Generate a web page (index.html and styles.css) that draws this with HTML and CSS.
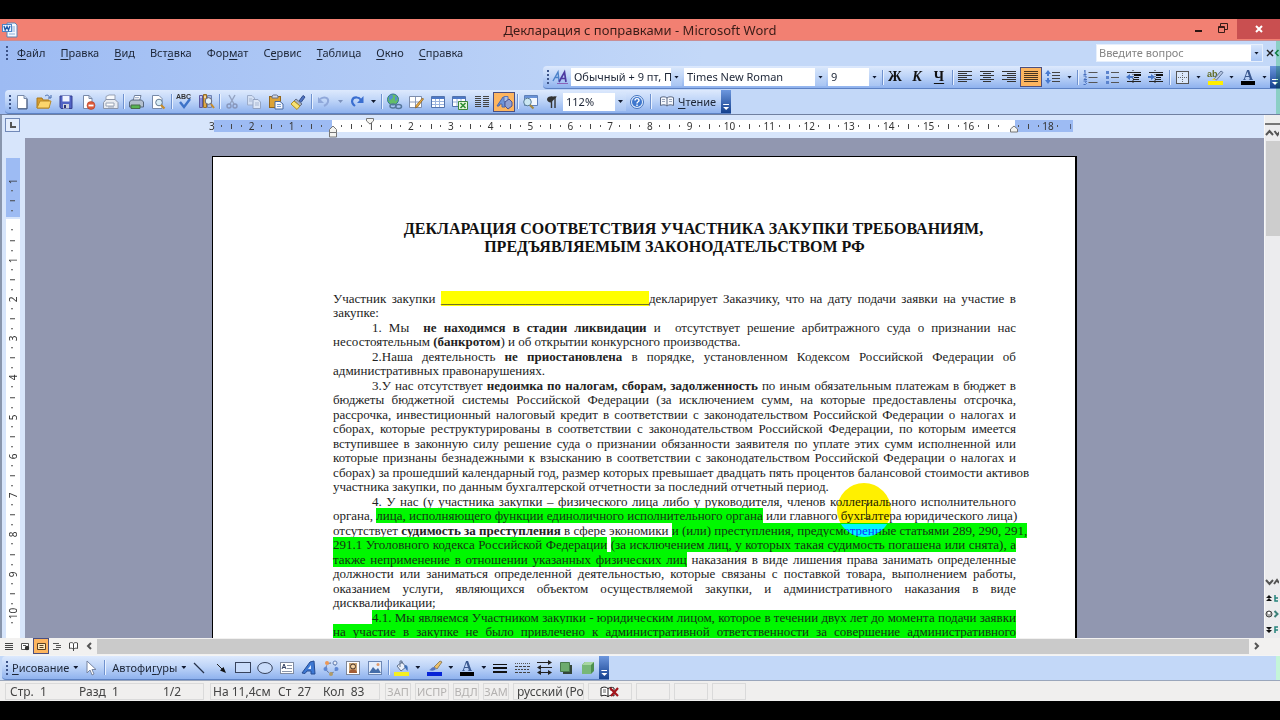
FILE: index.html
```html
<!DOCTYPE html>
<html lang="ru">
<head>
<meta charset="utf-8">
<title>Декларация с поправками - Microsoft Word</title>
<link rel="stylesheet" href="styles.css">
</head>
<body>
<div class="window">
<header class="titlebar">
  <svg class="app-icon" width="16" height="16" viewBox="0 0 16 16"><path d="M5 1h8l2 2v12H5z" fill="#f4f9ff" stroke="#5d84b4"/><path d="M8 5h5M8 7h5M8 9h5M7 12h6" stroke="#8badd8"/><rect x="0.500" y="2.500" width="9" height="7" fill="#eaf3ff" stroke="#4e86c8"/><path d="M2 4l1.200 4L5 4.500 6.500 8 8 4" fill="none" stroke="#205aa8" stroke-width="1.300"/></svg>
  <h1 class="window-title">Декларация с поправками - Microsoft Word</h1>
  <div class="window-buttons">
    <button class="win-btn" aria-label="Свернуть"><svg width="10" height="10" viewBox="0 0 10 10"><path d="M1 7h7v2H1z" fill="#2b1512"/></svg></button>
    <button class="win-btn" aria-label="Восстановить"><svg width="10" height="10" viewBox="0 0 10 10"><path d="M.5 3.500h6v6h-6zM.5 4.500h6M2.500 3V.500h7v6H7" fill="none" stroke="#3a1c18"/></svg></button>
    <button class="win-btn win-close" aria-label="Закрыть"><svg width="10" height="10" viewBox="0 0 10 10"><path d="M2 2l6 6M8 2L2 8" stroke="#fff" stroke-width="2"/></svg></button>
  </div>
</header>

<div class="bars">
  <div class="menu-row">
    <span class="grip"></span>
    <nav class="menu">
      <button><u>Ф</u>айл</button><button><u>П</u>равка</button><button><u>В</u>ид</button><button>Вст<u>а</u>вка</button><button>Фор<u>м</u>ат</button><button>С<u>е</u>рвис</button><button><u>Т</u>аблица</button><button><u>О</u>кно</button><button><u>С</u>правка</button>
    </nav>
    <div class="ask"><input type="text" placeholder="Введите вопрос" aria-label="Введите вопрос"><button class="drop" aria-label="Список вопросов"></button></div>
    <button class="doc-close" aria-label="Закрыть документ"><svg width="14" height="10" viewBox="0 0 14 10"><path d="M1 2l6 6M7 2L1 8" stroke="#222" stroke-width="1.400"/><path d="M12.500 2L9.500 5l3 3" fill="none" stroke="#16804f" stroke-width="1.600"/></svg></button>
  </div>

  <div class="toolbar format-bar">
    <span class="grip"></span>
    <button class="tool" aria-label="Стили"><svg width="18" height="16" viewBox="0 0 18 16"><path d="M2 12L7 3l1 9M4 8.500h4" fill="none" stroke="#4b82c9" stroke-width="1.400"/><path d="M8 13L13.500 3l1.500 10M10 9.500h5" fill="none" stroke="#4d3aa0" stroke-width="1.700"/><path d="M6 14.500h11" stroke="#8a62b8"/></svg></button>
    <span class="combo combo-style"><select aria-label="Стиль"><option>Обычный + 9 пт, По ширине</option></select><i class="drop"></i></span>
    <span class="combo combo-font"><select aria-label="Шрифт"><option>Times New Roman</option></select><i class="drop"></i></span>
    <span class="combo combo-size"><select aria-label="Размер шрифта"><option>9</option></select><i class="drop"></i></span>
    <i class="sep"></i>
    <button class="tool letter"><b>Ж</b></button>
    <button class="tool letter"><b><em>К</em></b></button>
    <button class="tool letter"><b><u>Ч</u></b></button>
    <i class="sep"></i>
    <button class="tool" aria-label="По левому краю"><svg width="14" height="12" viewBox="0 0 14 12"><path d="M0 .5h14M0 2.500h9M0 4.500h14M0 6.500h9M0 8.500h14M0 10.500h9" stroke="#333"/></svg></button>
    <button class="tool" aria-label="По центру"><svg width="14" height="12" viewBox="0 0 14 12"><path d="M0 .5h14M3 2.500h8M0 4.500h14M3 6.500h8M0 8.500h14M3 10.500h8" stroke="#333"/></svg></button>
    <button class="tool" aria-label="По правому краю"><svg width="14" height="12" viewBox="0 0 14 12"><path d="M0 .5h14M5 2.500h9M0 4.500h14M5 6.500h9M0 8.500h14M5 10.500h9" stroke="#333"/></svg></button>
    <button class="tool active" aria-label="По ширине"><svg width="14" height="12" viewBox="0 0 14 12"><path d="M0 .5h14M0 2.500h14M0 4.500h14M0 6.500h14M0 8.500h14M0 10.500h14" stroke="#4a3520"/></svg></button>
    <button class="tool" aria-label="Междустрочный интервал"><svg width="16" height="16" viewBox="0 0 16 16"><path d="M3 1l3 4H4v2H2V5H0zM3 15l3-4H4V9H2v2H0z" fill="#4a7bd0"/><path d="M7 3.500h8M7 6.500h8M7 9.500h8M7 12.500h8" stroke="#444"/></svg></button>
    <button class="arrow" aria-label="Выбор интервала"></button>
    <i class="sep"></i>
    <button class="tool" aria-label="Нумерация"><svg width="15" height="15" viewBox="0 0 15 15"><path d="M2 0v4M1 1h1M.5 4.500h3M.5 6h2.500v1.500L1 9.500h3M.5 11h3l-1 1.500 1 1-1 1H.5" fill="none" stroke="#466fbd"/><path d="M5.500 2.500h9M5.500 7.500h9M5.500 12.500h9" stroke="#555"/></svg></button>
    <button class="tool" aria-label="Маркеры"><svg width="15" height="15" viewBox="0 0 15 15"><path d="M1 1h3v3H1zM1 6h3v3H1zM1 11h3v3H1z" fill="#5b83cd"/><path d="M6 2.500h8M6 7.500h8M6 12.500h8" stroke="#555"/></svg></button>
    <button class="tool" aria-label="Уменьшить отступ"><svg width="16" height="14" viewBox="0 0 16 14"><path d="M1 2.500h14M7 9.500h6M1 11.500h14" stroke="#222"/><path d="M8 4h7v2H8zM8 7h5v1H8z" fill="#111"/><path d="M7 0v14" stroke="#333" stroke-dasharray="1 1"/><path d="M0 7l4-3v2h3v2H4v2z" fill="#4777c8"/></svg></button>
    <button class="tool" aria-label="Увеличить отступ"><svg width="16" height="14" viewBox="0 0 16 14"><path d="M1 2.500h14M7 9.500h6M1 11.500h14" stroke="#222"/><path d="M8 4h7v2H8zM8 7h5v1H8z" fill="#111"/><path d="M7 0v14" stroke="#333" stroke-dasharray="1 1"/><path d="M7 7L3 4v2H0v2h3v2z" fill="#4777c8"/></svg></button>
    <i class="sep"></i>
    <button class="tool" aria-label="Границы"><svg width="13" height="13" viewBox="0 0 13 13"><rect x=".5" y=".5" width="12" height="12" fill="#dbe8fb" stroke="#555"/><path d="M6.500 2v9M2 6.500h9" stroke="#666" stroke-dasharray="1 1"/></svg></button>
    <button class="arrow" aria-label="Вид границы"></button>
    <button class="tool" aria-label="Выделение цветом"><svg width="17" height="16" viewBox="0 0 17 16"><path d="M1 12h15v4H1z" fill="#ffee00"/><text x="0" y="8" class="svg-ab">ab</text><path d="M7 10l7-8 2 1.500-6.500 7.500z" fill="#b9c9e5" stroke="#5e7396"/><path d="M5 11l2-2 2 2z" fill="#e1cf3e"/></svg></button>
    <button class="arrow" aria-label="Цвет выделения"></button>
    <button class="tool" aria-label="Цвет шрифта"><svg width="16" height="16" viewBox="0 0 16 16"><text x="3" y="11" class="svg-a">A</text><path d="M1 12h14v4H1z" fill="#000"/></svg></button>
    <button class="arrow" aria-label="Выбор цвета шрифта"></button>
    <button class="endcap" aria-label="Параметры панели"></button>
  </div>

  <div class="toolbar standard-bar">
    <span class="grip"></span>
    <button class="tool" aria-label="Создать"><svg width="16" height="16" viewBox="0 0 16 16"><path d="M3.500 1.500h6.500l3 3v10H3.500z" fill="#fff" stroke="#7789a8"/><path d="M10 1.500v3h3" fill="#cbd9ee" stroke="#7789a8"/><path d="M13 5v10H4" fill="none" stroke="#475a7e"/></svg></button>
    <button class="tool" aria-label="Открыть"><svg width="16" height="16" viewBox="0 0 16 16"><path d="M1 14V4h5l1 2h6v8z" fill="#d79b2f" stroke="#a8781c"/><path d="M1 14l3-7h11l-2 7z" fill="#fbd56c" stroke="#b98a28"/><path d="M9 2c2-1.500 4-1 4.500 1.500M15 1v3h-3" fill="none" stroke="#4268ac"/></svg></button>
    <button class="tool" aria-label="Сохранить"><svg width="16" height="16" viewBox="0 0 16 16"><path d="M2 2h12v12.500H3L2 13z" fill="#5163c4" stroke="#343f91"/><rect x="4.500" y="2" width="7" height="5.500" fill="#eef3ff"/><rect x="5" y="10" width="6" height="4.500" fill="#cdd2dd"/><rect x="6" y="11" width="2" height="3" fill="#2b3478"/></svg></button>
    <button class="tool" aria-label="Разрешения"><svg width="16" height="16" viewBox="0 0 16 16"><path d="M3.500 1.500H9l3 3v10H3.500z" fill="#fff" stroke="#7789a8"/><path d="M9 1.500v3h3" fill="none" stroke="#7789a8"/><circle cx="11" cy="11.500" r="4" fill="#dd5b3b" stroke="#a63321" stroke-width=".5"/><path d="M8.500 11.500h5" stroke="#fff" stroke-width="1.800"/></svg></button>
    <button class="tool" aria-label="Сообщение"><svg width="17" height="16" viewBox="0 0 17 16"><path d="M4 7V2.500L7 1h6v6" fill="#f8fafd" stroke="#97a1b4"/><path d="M1.500 8.500L4 5.500h9l3 3v6h-14.500z" fill="#e8ebf1" stroke="#8c96aa"/><path d="M4 9h8v3H4zM6 13h6" fill="#fff" stroke="#99a3b5"/></svg></button>
    <i class="sep"></i>
    <button class="tool" aria-label="Печать"><svg width="16" height="16" viewBox="0 0 16 16"><path d="M5 7l1.500-5.500H13L11.500 7" fill="#fff" stroke="#6f7f9b"/><path d="M1.500 8l2-2h10l2 2v5h-14z" fill="#b3c0cf" stroke="#56677e"/><path d="M3 11h9v3.500H3z" fill="#57b551" stroke="#466b4b"/><path d="M7 3.500h4M6.500 5.200h4" stroke="#a9b7cf"/></svg></button>
    <button class="tool" aria-label="Предварительный просмотр"><svg width="16" height="16" viewBox="0 0 16 16"><path d="M2.500 1.500H9l3 3v10H2.500z" fill="#fff" stroke="#7789a8"/><circle cx="9" cy="8.500" r="3.300" fill="#d8edf7" stroke="#647c95"/><path d="M11 11l3.500 3.500" stroke="#c78d2a" stroke-width="2.200"/></svg></button>
    <i class="sep"></i>
    <button class="tool" aria-label="Правописание"><svg width="18" height="18" viewBox="0 0 18 18"><text x="1" y="6" class="svg-abc">ABC</text><path d="M5 9l4 5 6-8" fill="none" stroke="#3d73c8" stroke-width="2.400"/></svg></button>
    <button class="tool" aria-label="Справочные материалы"><svg width="17" height="17" viewBox="0 0 17 17"><path d="M1.500 2.500h3v12h-3z" fill="#8a8ed8" stroke="#5a589f"/><path d="M5.500 1.500h3v13h-3z" fill="#e0a848" stroke="#936f2b"/><path d="M9.500 2.500h4v12h-4z" fill="#a9bde6" stroke="#6d81b4"/><circle cx="10.500" cy="8" r="3.300" fill="#e4f3fb" stroke="#667"/><path d="M13 11l3 4" stroke="#c78d2a" stroke-width="2"/><path d="M2 4h2M6 4h2" stroke="#fff"/></svg></button>
    <i class="sep"></i>
    <button class="tool" aria-label="Вырезать"><svg width="16" height="16" viewBox="0 0 16 16"><path d="M5 1l5 9M11 1L6 10" stroke="#94a3c2" stroke-width="1.400"/><circle cx="5" cy="12" r="2" fill="none" stroke="#8796bb" stroke-width="1.400"/><circle cx="11" cy="12" r="2" fill="none" stroke="#8796bb" stroke-width="1.400"/></svg></button>
    <button class="tool" aria-label="Копировать"><svg width="16" height="16" viewBox="0 0 16 16"><path d="M1.500 1.500H6l2.500 2.500v7h-7z" fill="#d4e0f4" stroke="#9cacc9"/><path d="M7 5.500h5L14.500 8v6.500H7z" fill="#dce6f6" stroke="#92a3c2"/><path d="M3 5h3M3 7h3M9 9h4M9 11h4" stroke="#a9b8d2"/></svg></button>
    <button class="tool" aria-label="Вставить"><svg width="16" height="16" viewBox="0 0 16 16"><rect x="1.500" y="2.500" width="11" height="11" fill="#dca336" stroke="#93651a"/><path d="M4 4h6V2L8.500 1h-3L4 2z" fill="#d7dbe5" stroke="#66718a"/><path d="M7 7.500h5l3 2.500v5H7z" fill="#f5f8ff" stroke="#49699e"/><path d="M9 10.500h4M9 12.500h4" stroke="#7da1d5"/></svg></button>
    <button class="tool" aria-label="Формат по образцу"><svg width="16" height="16" viewBox="0 0 16 16"><path d="M9 7l4-5.500 2 1.500-4 5.500z" fill="#4f73c2" stroke="#344f8d"/><path d="M6 5l6 5-2 2-6-5z" fill="#a9b2c4" stroke="#667086"/><path d="M4 7l6 5-3 3.500L1 10z" fill="#f7e273" stroke="#b18f22"/></svg></button>
    <i class="sep"></i>
    <button class="tool" aria-label="Отменить"><svg width="16" height="16" viewBox="0 0 16 16"><path d="M4 5c5-3 9-1 8 3-.5 2-2 3-4 4" fill="none" stroke="#90a8da" stroke-width="2"/><path d="M2 3v6h6z" fill="#90a8da"/></svg></button>
    <button class="arrow muted" aria-label="История отмены"></button>
    <button class="tool" aria-label="Вернуть"><svg width="16" height="16" viewBox="0 0 16 16"><path d="M6 12C1 8 3 3 8 3.500c2 0 3 1 4 2.500" fill="none" stroke="#3a6ed0" stroke-width="2.200"/><path d="M14.500 2v7H8z" fill="#3a6ed0"/></svg></button>
    <button class="arrow" aria-label="История возврата"></button>
    <i class="sep"></i>
    <button class="tool" aria-label="Гиперссылка"><svg width="17" height="17" viewBox="0 0 17 17"><circle cx="7" cy="6.500" r="5.500" fill="#62bd68" stroke="#33739a"/><path d="M3 4c2-3 4-2 4 0S4 6 3 9M9 3c3 1 3 4 0 5" fill="#5490cf"/><ellipse cx="7" cy="13" rx="3" ry="2" fill="none" stroke="#55779b" stroke-width="1.500"/><ellipse cx="12.500" cy="13.500" rx="3" ry="2" fill="none" stroke="#55779b" stroke-width="1.500"/></svg></button>
    <button class="tool" aria-label="Панель границ"><svg width="16" height="16" viewBox="0 0 16 16"><path d="M1.500 2.500h12v11h-12z" fill="#fff" stroke="#7d8dab"/><path d="M7.500 3v10M2 8h11" stroke="#8a9aba"/><path d="M14.500 4l1 1-6 8-2 1 .5-2.500z" fill="#ebaa3e" stroke="#8d642a" stroke-width=".8"/></svg></button>
    <button class="tool" aria-label="Добавить таблицу"><svg width="16" height="16" viewBox="0 0 16 16"><path d="M1.500 2.500h13v11h-13z" fill="#fff" stroke="#5373ac"/><path d="M2 3h12v2H2z" fill="#4c78c8"/><path d="M5.500 5v8M9.500 5v8M2 7.500h12M2 10.500h12" stroke="#9bb3dd"/></svg></button>
    <button class="tool" aria-label="Добавить таблицу Excel"><svg width="16" height="16" viewBox="0 0 16 16"><path d="M.5 2.500h13v10H.5z" fill="#fff" stroke="#5373ac"/><path d="M1 3h12v2H1z" fill="#4c78c8"/><path d="M5 5v7M9 5v7M1 8h12" stroke="#9bb3dd"/><path d="M6.500 7.500h9v8h-9z" fill="#e7f6dc" stroke="#39853a"/><path d="M8.500 9l5 5M13.500 9l-5 5" stroke="#2d8f35" stroke-width="1.600"/></svg></button>
    <button class="tool" aria-label="Колонки"><svg width="14" height="12" viewBox="0 0 14 12"><path d="M0 .5h6M8 .5h6M0 2.500h6M8 2.500h6M0 4.500h6M8 4.500h6M0 6.500h6M8 6.500h6M0 8.500h6M8 8.500h6M0 10.500h6M8 10.500h6" stroke="#444"/></svg></button>
    <button class="tool active" aria-label="Рисование"><svg width="17" height="16" viewBox="0 0 17 16"><path d="M1 12L7 3l2 1v9H6V10H4l-1 2z" fill="#6e94da" stroke="#4a66ae"/><path d="M8 2.500h4v5H8z" fill="#aac1ec" stroke="#5c74b2"/><path d="M9 8l4-3 3 3v4l-4 3-3-3z" fill="#8f9fd2" stroke="#4c5492"/></svg></button>
    <i class="sep"></i>
    <button class="tool" aria-label="Схема документа"><svg width="16" height="16" viewBox="0 0 16 16"><path d="M2.500 1.500h13v10h-13z" fill="#f3f8ff" stroke="#5e80b8"/><path d="M3 2h12v2H3z" fill="#6a93d8"/><circle cx="5.500" cy="8" r="3.800" fill="#cbe7f3" stroke="#577c98"/><path d="M8 11l3.500 3.500" stroke="#a58a42" stroke-width="2.200"/></svg></button>
    <button class="tool" aria-label="Непечатаемые знаки"><svg width="12" height="14" viewBox="0 0 12 14"><path d="M11 1.500H4.500C2 1.500 1 3 1 4.500S2.500 7.500 5 7.500z" fill="#333"/><path d="M5.500 1.500V13M9 1.500V13" stroke="#333" stroke-width="1.400"/></svg></button>
    <span class="combo combo-zoom"><select aria-label="Масштаб"><option>112%</option></select><i class="drop"></i></span>
    <button class="tool" aria-label="Справка"><svg width="14" height="14" viewBox="0 0 14 14"><circle cx="7" cy="7" r="6.500" fill="#e5f0ff" stroke="#4473bd"/><circle cx="7" cy="7" r="5" fill="#3e77ce"/><path d="M5 5.500c0-2.500 4-2.500 4 0C9 7 7 6.500 7 8.500M7 9.500V11" fill="none" stroke="#fff" stroke-width="1.400"/></svg></button>
    <i class="sep"></i>
    <button class="text-tool reading"><svg width="14" height="12" viewBox="0 0 14 12"><path d="M.5 1.500c2-1 5-1 6.500.5 1.500-1.500 4.500-1.500 6.500-.5v8c-2-1-5-1-6.500.5-1.500-1.500-4.500-1.500-6.500-.5zM7 2v8" fill="#f4f7fc" stroke="#596782"/><path d="M2 3.500h3M2 5.500h3M9 3.500h3M9 5.500h3" stroke="#99a6bd"/></svg><span><u>Ч</u>тение</span></button>
    <button class="endcap" aria-label="Параметры панели"></button>
  </div>
</div>

<main class="workspace">
  <div class="tab-corner"><button class="tab-type" aria-label="Тип табуляции"><svg width="8" height="8" viewBox="0 0 8 8"><path d="M2 1v5h5" fill="none" stroke="#555" stroke-width="2"/></svg></button></div>
  <div class="hruler">
    <div class="hruler-track">
      <div class="hruler-scale">
        <span class="bare">3</span><span>2</span><span>1</span><span></span><span>1</span><span>2</span><span>3</span><span>4</span><span>5</span><span>6</span><span>7</span><span>8</span><span>9</span><span>10</span><span>11</span><span>12</span><span>13</span><span>14</span><span>15</span><span>16</span><span></span><span>18</span>
      </div>
      <svg class="marker marker-first" width="10" height="7" viewBox="0 0 10 7"><path d="M1.500.500h7v2.500L5 6 1.500 3z" fill="#f4f4f0" stroke="#777"/></svg>
      <svg class="marker marker-left" width="10" height="13" viewBox="0 0 10 13"><path d="M1.500 7.500h7V12h-7zM1.500 7.500V4.500L5 1l3.500 3.500v3z" fill="#f4f4f0" stroke="#777"/></svg>
      <svg class="marker marker-right" width="10" height="8" viewBox="0 0 10 8"><path d="M1.500 7V4L5 1l3.500 3v3z" fill="#f4f4f0" stroke="#777"/></svg>
    </div>
  </div>
  <div class="vruler">
    <div class="vruler-scale">
      <span class="bare">1</span><span></span><span>1</span><span>2</span><span>3</span><span>4</span><span>5</span><span>6</span><span>7</span><span>8</span><span>9</span><span>10</span>
    </div>
  </div>
  <div class="canvas">
    <article class="page">
      <h2>ДЕКЛАРАЦИЯ СООТВЕТСТВИЯ УЧАСТНИКА ЗАКУПКИ ТРЕБОВАНИЯМ,<br>ПРЕДЪЯВЛЯЕМЫМ ЗАКОНОДАТЕЛЬСТВОМ РФ</h2>
      <p class="flush"><span>Участник закупки <mark class="blank">________________________________</mark>декларирует Заказчику, что на дату подачи заявки на участие в</span><span>закупке:</span></p>
      <p><span>1. Мы&nbsp; <b>не находимся в стадии ликвидации</b> и&nbsp; отсутствует решение арбитражного суда о признании нас</span><span>несостоятельным <b>(банкротом</b>) и об открытии конкурсного производства.</span></p>
      <p><span>2.Наша деятельность <b>не приостановлена</b> в порядке, установленном Кодексом Российской Федерации об</span><span>административных правонарушениях.</span></p>
      <p><span>3.У нас отсутствует <b>недоимка по налогам, сборам, задолженность</b> по иным обязательным платежам в бюджет в</span><span>бюджеты бюджетной системы Российской Федерации (за исключением сумм, на которые предоставлены отсрочка,</span><span>рассрочка, инвестиционный налоговый кредит в соответствии с законодательством Российской Федерации о налогах и</span><span>сборах, которые реструктурированы в соответствии с законодательством Российской Федерации, по которым имеется</span><span>вступившее в законную силу решение суда о признании обязанности заявителя по уплате этих сумм исполненной или</span><span>которые признаны безнадежными к взысканию в соответствии с законодательством Российской Федерации о налогах и</span><span>сборах) за прошедший календарный год, размер которых превышает двадцать пять процентов балансовой стоимости активов</span><span>участника закупки, по данным бухгалтерской отчетности за последний отчетный период.</span></p>
      <p><span>4. У нас (у участника закупки – физического лица либо у руководителя, членов коллегиального исполнительного</span><span>органа, <mark>лица, исполняющего функции единоличного исполнительного органа</mark> или главного бухгалтера юридического лица)</span><span>отсутствует <b>судимость за преступления</b> в сфере экономики <mark>и (или) преступления, предусмотренные статьями 289, 290, 291,</mark></span><span><mark>291.1 Уголовного кодекса Российской Федерации</mark> <mark>(за исключением лиц, у которых такая судимость погашена или снята), а</mark></span><span><mark>также неприменение в отношении указанных физических лиц</mark> наказания в виде лишения права занимать определенные</span><span>должности или заниматься определенной деятельностью, которые связаны с поставкой товара, выполнением работы,</span><span>оказанием услуги, являющихся объектом осуществляемой закупки, и административного наказания в виде</span><span>дисквалификации;</span></p>
      <p class="open"><span><mark>4.1. Мы являемся Участником закупки - юридическим лицом, которое в течении двух лет до момента подачи заявки</mark></span><span><mark>на участие в закупке не было привлечено к административной ответственности за совершение административного</mark></span></p>
      <i class="spot spot-top"></i><i class="spot spot-bottom"></i>
      <svg class="caret" width="7" height="16" viewBox="0 0 7 16"><path d="M1 .5h2l.5 1 .5-1h2M3.500 1v14M1 15.500h2l.5-1 .5 1h2" fill="none" stroke="#555a20"/></svg>
    </article>
  </div>
  <div class="vscroll">
    <i class="split"></i>
    <button aria-label="Вверх"><svg width="14" height="8" viewBox="0 0 14 8"><path d="M1 6l3.500-4L8 6M9.500 2l3 4 2-3" fill="none" stroke="#555" stroke-width="2"/></svg></button>
    <i class="vthumb"></i>
    <div class="vscroll-end">
      <button aria-label="Вниз"><svg width="14" height="8" viewBox="0 0 14 8"><path d="M1 2l3.500 4L8 2M9 6l3-4 2 3" fill="none" stroke="#555" stroke-width="2"/></svg></button>
      <button aria-label="Предыдущая страница"><svg width="14" height="8" viewBox="0 0 14 8"><path d="M1 4l3-3 3 3zM1 7l3-3 3 3z" fill="#111"/><path d="M10 1v6h3M10 4h3" fill="none" stroke="#25837c" stroke-width="1.500"/></svg></button>
      <button aria-label="Объект перехода"><svg width="14" height="8" viewBox="0 0 14 8"><circle cx="4" cy="4" r="3" fill="#aaa" stroke="#444"/><path d="M3 2h2v2H3z" fill="#fff"/><path d="M9.500 1l3 3-3 3" fill="none" stroke="#3c8079" stroke-width="2"/></svg></button>
      <button aria-label="Следующая страница"><svg width="14" height="8" viewBox="0 0 14 8"><path d="M1 1h6L4 4zM1 4h6L4 7z" fill="#111"/><path d="M10 7V1h3M10 4h3" fill="none" stroke="#25837c" stroke-width="1.500"/></svg></button>
    </div>
  </div>
</main>

<div class="hscroll">
  <button class="view" aria-label="Обычный режим"><svg width="8" height="9" viewBox="0 0 8 9"><path d="M0 1.500h8M0 3.500h8M0 5.500h8M0 7.500h8" stroke="#444"/></svg></button>
  <button class="view" aria-label="Веб-документ"><svg width="9" height="9" viewBox="0 0 9 9"><path d="M.5 1.500h7v6h-7zM2 3.500h3" fill="#fff" stroke="#555"/><circle cx="6" cy="6" r="2.200" fill="#333"/></svg></button>
  <button class="view view-on" aria-label="Разметка страницы"><svg width="9" height="9" viewBox="0 0 9 9"><path d="M.5 1.500h8v6h-8zM2.500 3.500h4M2.500 5.500h4" fill="#ffe9bd" stroke="#5a4020"/></svg></button>
  <button class="view" aria-label="Структура"><svg width="9" height="9" viewBox="0 0 9 9"><path d="M0 1.500h6M3 3.500h5M3 5.500h5M0 7.500h6" stroke="#555"/></svg></button>
  <button class="view" aria-label="Режим чтения"><svg width="9" height="9" viewBox="0 0 9 9"><path d="M.5 1c1.500-.7 3-.5 4 .5C5.500.500 7 .3 8.500 1v5.500C7 6 5.500 6 4.500 7.500 3.500 6 2 6 .5 6.500zM4.500 2v7" fill="#fff" stroke="#444"/></svg></button>
  <button class="view" aria-label="Влево"><svg width="8" height="8" viewBox="0 0 8 8"><path d="M6 1L3 4l3 3" fill="none" stroke="#555" stroke-width="2"/></svg></button>
  <i class="htrack"></i>
  <button class="view" aria-label="Вправо"><svg width="8" height="8" viewBox="0 0 8 8"><path d="M2 1l3 3-3 3" fill="none" stroke="#555" stroke-width="2"/></svg></button>
  <i class="hcorner"></i>
</div>

<div class="draw-row">
  <div class="toolbar draw-bar">
    <span class="grip"></span>
    <button class="text-tool"><span><u>Р</u>исование</span><i class="tri"></i></button>
    <button class="tool" aria-label="Выбор объектов"><svg width="12" height="16" viewBox="0 0 12 16"><path d="M2 1v12l3-3 2 5 2-1-2-4.500h4z" fill="#fff" stroke="#7684a1"/></svg></button>
    <i class="sep"></i>
    <button class="text-tool autoshapes"><span>Автофи<u>г</u>уры</span><i class="tri"></i></button>
    <button class="tool" aria-label="Линия"><svg width="16" height="16" viewBox="0 0 16 16"><path d="M3 3l10 10" stroke="#26324a" stroke-width="1.200"/></svg></button>
    <button class="tool" aria-label="Стрелка"><svg width="16" height="16" viewBox="0 0 16 16"><path d="M4 4l6 6" stroke="#222"/><path d="M13 13L7 10.500 10.500 7z" fill="#111"/></svg></button>
    <button class="tool" aria-label="Прямоугольник"><svg width="16" height="16" viewBox="0 0 16 16"><rect x=".5" y="2.500" width="15" height="10" fill="#c9dcfa" stroke="#37435c"/></svg></button>
    <button class="tool" aria-label="Овал"><svg width="16" height="16" viewBox="0 0 16 16"><ellipse cx="8" cy="8" rx="7.300" ry="5.500" fill="#c9dcfa" stroke="#37435c"/></svg></button>
    <button class="tool" aria-label="Надпись"><svg width="16" height="16" viewBox="0 0 16 16"><rect x="1.500" y="2.500" width="13" height="11" fill="#fff" stroke="#808ba1"/><path d="M3 9l2-5 2 5M4 7.500h2" fill="none" stroke="#344263"/><path d="M8 5.500h5M8 8.500h5M3 11.500h10" stroke="#8994a8"/></svg></button>
    <button class="tool" aria-label="Объект WordArt"><svg width="16" height="16" viewBox="0 0 16 16"><path d="M1 13L9 2l4-1 1 13h-4v-3H6l-2 2.500z" fill="#3d78d3" stroke="#254c93"/><path d="M7 9h3V5z" fill="#dce9fd"/></svg></button>
    <button class="tool" aria-label="Диаграмма"><svg width="16" height="16" viewBox="0 0 16 16"><circle cx="8" cy="8" r="5" fill="none" stroke="#53658b" stroke-dasharray="3 2"/><circle cx="4" cy="3" r="2" fill="#ec9855"/><circle cx="12" cy="3" r="2" fill="#e8ecf4" stroke="#6481b5"/><circle cx="2.500" cy="9" r="2" fill="#5f88d4"/><circle cx="13.500" cy="9" r="2" fill="#5f88d4"/><circle cx="8" cy="14" r="2" fill="#b29b67"/></svg></button>
    <button class="tool" aria-label="Картинка"><svg width="16" height="16" viewBox="0 0 16 16"><rect x="1.500" y="1.500" width="13" height="13" fill="#fff" stroke="#7e8797"/><rect x="4" y="3" width="8" height="10" fill="#c8a373"/><circle cx="8" cy="6.500" r="2.500" fill="#f4d3a2" stroke="#473428"/><path d="M4 13c0-5 8-5 8 0z" fill="#a45d34"/></svg></button>
    <button class="tool" aria-label="Рисунок"><svg width="16" height="16" viewBox="0 0 16 16"><rect x="1.500" y="1.500" width="13" height="13" fill="#e5eefb" stroke="#6d87b4"/><path d="M2 13l4-6 3 3 2-2 3 5z" fill="#446da9"/><circle cx="11" cy="4.500" r="1.500" fill="#e39a69"/></svg></button>
    <i class="sep"></i>
    <button class="tool" aria-label="Цвет заливки"><svg width="17" height="16" viewBox="0 0 17 16"><path d="M1 12h15v4H1z" fill="#f4ef21"/><path d="M4 6l5-4 4 5-5 4z" fill="#edf2fa" stroke="#60728e"/><path d="M7 7V1h2v3" fill="none" stroke="#60728e"/><path d="M12 5c3 0 3 3 2.500 6C13 10 13 8 11 7z" fill="#3d6fb6"/></svg></button>
    <button class="arrow" aria-label="Выбор заливки"></button>
    <button class="tool" aria-label="Цвет линий"><svg width="17" height="16" viewBox="0 0 17 16"><path d="M1 12h15v4H1z" fill="#0724d6"/><path d="M8 7l6-6 2 1-5 7z" fill="#ecc068" stroke="#80704f" stroke-width=".8"/><path d="M3 10c2 0 2-3 5-3l2 2c-2 2-4 2-7 1z" fill="#5675bd"/></svg></button>
    <button class="arrow" aria-label="Выбор цвета линий"></button>
    <button class="tool" aria-label="Цвет текста"><svg width="16" height="16" viewBox="0 0 16 16"><text x="3" y="11" class="svg-a">A</text><path d="M1 12h14v4H1z" fill="#000"/></svg></button>
    <button class="arrow" aria-label="Выбор цвета текста"></button>
    <button class="tool" aria-label="Тип линии"><svg width="14" height="12" viewBox="0 0 14 12"><path d="M0 2.500h14" stroke="#111"/><path d="M0 6h14" stroke="#111" stroke-width="2"/><path d="M0 10h14" stroke="#111" stroke-width="2"/></svg></button>
    <button class="tool" aria-label="Тип штриха"><svg width="15" height="12" viewBox="0 0 15 12"><path d="M0 1.500h15" stroke="#555" stroke-dasharray="1 1"/><path d="M0 4.500h15M0 10.500h15" stroke="#444" stroke-dasharray="3 1"/><path d="M0 7.500h15" stroke="#444" stroke-dasharray="2 1"/></svg></button>
    <button class="tool" aria-label="Вид стрелки"><svg width="15" height="15" viewBox="0 0 15 15"><path d="M0 2.500h12M3 7.500h12M2 12.500h11" stroke="#222"/><path d="M15 2.500L11 0v5zM0 7.500L4 5v5zM0 12.500L4 10v5zM15 12.500L11 10v5z" fill="#222"/></svg></button>
    <button class="tool" aria-label="Тень"><svg width="14" height="14" viewBox="0 0 14 14"><path d="M4 4h9v9H4z" fill="#34463a"/><path d="M1.500 1.500h9v9h-9z" fill="#6cab6e" stroke="#47794b"/></svg></button>
    <button class="tool" aria-label="Объем"><svg width="16" height="16" viewBox="0 0 16 16"><path d="M2 5l3-3h9v9l-3 3H2z" fill="#4c8f4f"/><path d="M2 5h9v9H2z" fill="#77b778"/><path d="M2 5l3-3h9l-3 3z" fill="#a6d6a1"/></svg></button>
    <button class="endcap" aria-label="Параметры панели"></button>
  </div>
</div>

<footer class="status">
  <div class="cell cell-page"><span>Стр.&nbsp; 1</span><span>Разд&nbsp; 1</span><span>1/2</span></div>
  <div class="cell cell-pos"><span>На 11,4см</span><span>Ст&nbsp; 27</span><span>Кол&nbsp; 83</span></div>
  <div class="cell mode">ЗАП</div><div class="cell mode mode-wide">ИСПР</div><div class="cell mode">ВДЛ</div><div class="cell mode">ЗАМ</div>
  <div class="cell cell-lang">русский (Ро</div>
  <div class="cell cell-spell"><svg width="20" height="12" viewBox="0 0 20 12"><path d="M1 2c3-1.500 5-1 7 .5 2-1.500 4-1.500 6-.5v8c-2-1-4-1-6 .5-2-1.500-4-1.500-7-.5zM8 2v9" fill="#fff" stroke="#222"/><path d="M3 4h3M3 6h3M10 4h3" stroke="#666"/><path d="M10 2l8 8M18 2l-7 8" stroke="#a3151b" stroke-width="2.200"/></svg></div>
  <div class="cell cell-blank"></div><div class="cell cell-blank"></div><div class="cell cell-blank"></div>
</footer>
</div>
</body>
</html>
```
FILE: styles.css
```css
* { box-sizing: border-box; }

body {
  margin: 0;
  background: #000;
  color: #1c2536;
  font: 11px/16px "Noto Sans", "Open Sans", sans-serif;
}

button, input, select {
  margin: 0;
  padding: 0;
  border: 0;
  background: none;
  color: inherit;
  font: inherit;
}

svg { display: block; flex: none; }
u { text-underline-offset: 2px; }

.window {
  display: flex;
  flex-direction: column;
  height: 100vh;
  border: solid #000;
  border-width: 19px 0;
  overflow: hidden;
}

/* Title bar */
.titlebar {
  display: grid;
  grid-template-columns: 1fr auto 1fr;
  align-items: center;
  height: 22px;
  flex: none;
  background: #f28072;
  border-bottom: 1px solid #c98e95;
}
.app-icon { margin-left: 2px; }
.window-title { margin: 0; font-size: 13px; line-height: 20px; font-weight: 400; color: #3a1c18; }
.window-buttons { display: flex; justify-content: flex-end; align-self: stretch; }
.win-btn { display: grid; place-items: center; width: 24px; height: 18px; }
.win-close { width: 43px; height: 20px; margin-left: 2px; background: #c94f50; }

/* Menu and tool bars */
.bars {
  position: relative;
  flex: none;
  display: flex;
  flex-direction: column;
  height: 74px;
  background: linear-gradient(90deg, #9dbbf3, #c3d8f8 55%);
  border-bottom: 1px solid #7080a0;
}
.bars::after {
  content: "";
  position: absolute;
  top: 0;
  right: 0;
  width: 4px;
  height: 73px;
  background: #b6f5cb;
  mix-blend-mode: multiply;
}
.menu-row { display: flex; align-items: center; height: 24px; padding-left: 6px; }
.menu { display: flex; flex: 1; gap: 15px; margin-left: 9px; }
.grip {
  flex: none;
  width: 2px;
  height: 14px;
  background: repeating-linear-gradient(#3c5488 0 2px, transparent 2px 4px);
}
.ask { display: flex; width: 167px; height: 18px; background: #fff; border: 1px solid #e6effc; }
.ask input { flex: 1; min-width: 0; padding-left: 2px; outline: 0; }
.ask input::placeholder { color: #858585; opacity: 1; }
.doc-close { margin-left: 3px; }

.toolbar {
  display: flex;
  align-items: center;
  height: 23px;
  padding-left: 4px;
  border-radius: 4px 0 0 4px;
  background: linear-gradient(#dde9fd, #bfd5f8 45%, #8fb2ee);
  border-bottom: 1px solid #5d82c4;
}
.format-bar { align-self: flex-end; margin-top: 1px; }
.standard-bar { align-self: flex-start; height: 24px; margin: 1px 0 0 5px; }

.tool { display: grid; place-items: center; flex: none; width: 22px; height: 20px; }
.active { background: #fdb55f; border: 1px solid #4b4f80; }
.letter { font: 14px/16px "Liberation Serif", serif; color: #111; }
.sep { flex: none; width: 1px; height: 15px; margin: 0 1px 0 2px; background: #6f92cf; box-shadow: 1px 0 #e8f1ff; }

.drop, .arrow { display: grid; place-items: center; flex: none; width: 11px; }
.arrow { height: 20px; }
.drop { background: linear-gradient(#d6e5fb, #a9c5f3); }
.drop::after, .arrow::after, .tri {
  content: "";
  width: 5px;
  height: 3px;
  background: #111a30;
  clip-path: polygon(0 0, 100% 0, 50% 100%);
}
.muted::after { background: #7d92bd; }

.combo { display: flex; flex: none; height: 18px; margin-right: 2px; background: #fff; }
.combo select { flex: 1; min-width: 0; padding-left: 3px; appearance: none; overflow: hidden; white-space: nowrap; outline: 0; }
.combo-style { width: 111px; }
.combo-font { width: 142px; }
.combo-size { width: 52px; margin-right: 0; }
.combo-zoom { width: 63px; margin-right: 0; }

.text-tool { display: flex; align-items: center; gap: 4px; padding: 0 2px; white-space: nowrap; }
.reading { padding: 0 5px 0 8px; }
.endcap {
  display: grid;
  place-items: end center;
  align-self: stretch;
  width: 10px;
  padding-bottom: 3px;
  background: linear-gradient(#6d97de, #15418f);
}
.endcap::after {
  content: "";
  width: 6px;
  height: 6px;
  background: linear-gradient(#fff 0 1px, transparent 1px 3px, #fff 3px);
  clip-path: polygon(0 0, 100% 0, 100% 50%, 50% 100%, 0 50%);
}

.svg-ab { font: bold 9px "Liberation Sans", sans-serif; fill: #5f6a20; }
.svg-a { font: bold 14px "Liberation Serif", serif; fill: #3a588f; }
.svg-abc { font: bold 7px "Liberation Sans", sans-serif; fill: #333; }

/* Rulers, page and scrollbars */
.workspace {
  flex: 1;
  min-height: 0;
  display: grid;
  grid-template: 23px minmax(0, 1fr) / 25px minmax(0, 1fr) 16px;
  background: #d7e5fb;
}
.tab-corner { padding: 3px 0 0 3px; border-left: 2px solid #8996ad; }
.tab-type { display: grid; place-items: center; width: 15px; height: 14px; border: 1px solid #7189b8; background: #e4edfc; }

.hruler { padding-top: 5px; overflow: hidden; }
.hruler-track { position: relative; width: 863px; margin: 0 auto; }
.hruler-scale {
  display: grid;
  grid-template-columns: repeat(22, 1fr);
  width: 886px;
  height: 12px;
  margin-left: -26px;
  padding-right: 10px;
  background:
    linear-gradient(#56627f, #56627f) 883px 4px / 1px 5px no-repeat,
    linear-gradient(90deg, transparent 27px, #9dbbf3 27px 145px, #fff 145px 828px, #9dbbf3 828px);
}
.hruler-scale span {
  padding-left: 25%;
  font-size: 10px;
  line-height: 12px;
  text-align: center;
  color: #333;
  background:
    linear-gradient(#444, #444) 12% 4px / 1px 5px no-repeat,
    linear-gradient(#555, #555) 37% 5px / 1px 2px no-repeat,
    linear-gradient(#555, #555) 88% 5px / 1px 2px no-repeat;
}
.hruler-scale .bare { background: linear-gradient(#555, #555) 88% 5px / 1px 2px no-repeat; }
.marker { position: absolute; }
.marker-first { left: 152px; top: -2px; }
.marker-left { left: 115px; top: 5px; }
.marker-right { left: 796px; top: 5px; }

.vruler { padding: 20px 0 0 4px; border-left: 2px solid #8996ad; overflow: hidden; }
.vruler-scale {
  display: grid;
  grid-template-rows: repeat(12, 1fr);
  height: 480px;
  width: 14px;
  padding-bottom: 9px;
  background: linear-gradient(#9dbbf3 59px, #d7e5fb 59px 61px, #fff 61px);
}
.vruler-scale span {
  writing-mode: vertical-rl;
  transform: rotate(180deg);
  padding-bottom: 7px;
  font-size: 10px;
  line-height: 14px;
  text-align: center;
  color: #333;
  background:
    linear-gradient(#444, #444) 5px 92% / 5px 1px no-repeat,
    linear-gradient(#555, #555) 7px 66% / 2px 1px no-repeat,
    linear-gradient(#555, #555) 7px 15% / 2px 1px no-repeat;
}
.vruler-scale .bare { background: linear-gradient(#555, #555) 7px 15% / 2px 1px no-repeat; }

.canvas { overflow: hidden; padding-top: 18px; background: #9197b0; }
.page {
  position: relative;
  width: 865px;
  min-height: 600px;
  margin: 0 auto;
  padding: 63px 59px 0 120px;
  background: #fff;
  border: solid #000;
  border-width: 1px 2px 0 1px;
  font: 13px/15px "Liberation Serif", "Times New Roman", serif;
  color: #222;
}
.page h2 { margin: 0 0 35px; font-size: 16px; line-height: 18px; text-align: center; text-indent: 38px; color: #111; }
.page p {
  display: grid;
  grid-template-columns: minmax(0, 1fr);
  grid-auto-rows: 14px 15px;
  margin: 0;
}
.page p span { white-space: nowrap; text-align-last: justify; }
.page p span:first-child { text-indent: 39px; }
.page .flush span:first-child { text-indent: 0; }
.page p span:last-child { text-align-last: left; }
.page .open span:last-child { text-align-last: justify; }
.page mark { background: #00f800; color: #143214; }
.page .blank { background: #ff0; color: #333; }

.spot { position: absolute; left: 624px; top: 326px; width: 54px; height: 54px; border-radius: 50%; }
.spot-top { background: #fff000; clip-path: inset(0 0 13px); mix-blend-mode: multiply; }
.spot-bottom { background: #00f; clip-path: inset(41px 0 0); mix-blend-mode: screen; }
.caret { position: absolute; left: 650px; top: 346px; }

.vscroll {
  grid-column: 3;
  grid-row: 1 / 3;
  display: flex;
  flex-direction: column;
  background: #ececee;
  border-left: 1px solid #f8f8f8;
  overflow: hidden;
}
.split { height: 10px; background: #eee; border-bottom: 2px solid #777; }
.vscroll button { display: grid; place-items: center start; height: 16px; }
.vthumb { height: 95px; margin-left: 1px; background: #cdcdcd; }
.vscroll-end { display: flex; flex-direction: column; margin-top: auto; }

.hscroll { display: flex; flex: none; height: 17px; padding-left: 1px; background: #f2f1f0; }
.view { display: grid; place-items: center; flex: none; width: 16px; height: 16px; }
.view-on { background: #fdb55f; border: 1px solid #4b4f80; }
.htrack { flex: 1; margin: 1px 0 1px; background: #cacaca; }
.hcorner { width: 15px; }

.draw-row { flex: none; height: 26px; background: linear-gradient(90deg, #c3d8f8 calc(100% - 4px), #c4f5d8 calc(100% - 4px)); border-top: 1px solid #f4f4f4; border-bottom: 1px solid #9aa6bb; }
.draw-bar { width: max-content; height: 24px; margin-left: 2px; }
.draw-bar .text-tool { margin-left: 2px; }
.draw-bar .autoshapes { margin-left: 4px; }

/* Status bar */
.status { display: flex; flex: none; gap: 4px; height: 20px; padding: 2px 0 0 5px; background: #f0efee; color: #444; font-size: 12px; }
.cell { display: flex; align-items: center; height: 17px; padding: 0 3px; border: 1px solid #dadada; white-space: nowrap; }
.cell-page { display: grid; grid-template-columns: 69px 84px auto; width: 199px; padding-left: 4px; }
.cell-pos { display: grid; grid-template-columns: 65px 45px auto; width: 170px; margin: 0 1px 0 2px; padding-left: 2px; }
.mode { width: 26px; padding: 0; justify-content: center; font-size: 11px; color: #b3b1b0; }
.mode-wide { width: 34px; }
.cell-lang { width: 71px; }
.cell-spell { width: 44px; justify-content: center; }
.cell-blank { width: 34px; }
```
